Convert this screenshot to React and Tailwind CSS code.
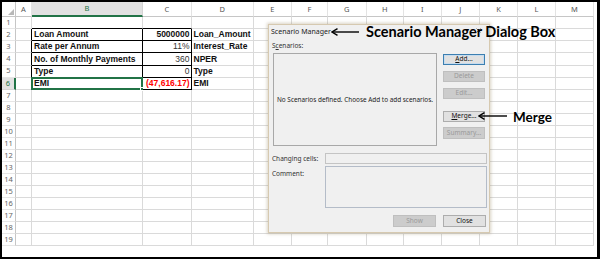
import React from "react";

const LETTERS = ["", "A", "B", "C", "D", "E", "F", "G", "H", "I", "J", "K", "L", "M"];

const DATA = {
  2: { 2: "Loan Amount", 3: "5000000", 4: "Loan_Amount" },
  3: { 2: "Rate per Annum", 3: "11%", 4: "Interest_Rate" },
  4: { 2: "No. of Monthly Payments", 3: "360", 4: "NPER" },
  5: { 2: "Type", 3: "0", 4: "Type" },
  6: { 2: "EMI", 3: "(47,616.17)", 4: "EMI" },
};

function cellClass(r, c) {
  if (r === 0 && c === 0) return "relative border-r border-b border-[#c6c6c6] bg-white";
  if (r === 0) {
    if (c === 2)
      return "flex items-center justify-center border-r border-r-[#d4d4d4] border-b-2 border-b-[#217346] bg-[#e1e1e1] text-[#217346] text-[7.5px] font-['Noto_Sans',sans-serif]";
    return "flex items-center justify-center border-r border-b border-r-[#e3e3e3] border-b-[#c6c6c6] bg-white text-[#555] text-[7.5px] font-['Noto_Sans',sans-serif]";
  }
  if (c === 0) {
    if (r === 6)
      return "flex items-center justify-center border-r-2 border-b border-r-[#217346] border-b-[#d4d4d4] bg-[#e1e1e1] text-[#217346] text-[7.5px] font-['Noto_Sans',sans-serif]";
    return "flex items-center justify-center border-r border-b border-r-[#c6c6c6] border-b-[#e6e6e6] bg-white text-[#666] text-[7.5px] font-['Noto_Sans',sans-serif]";
  }
  const inTable = r >= 2 && r <= 6 && (c === 2 || c === 3);
  if (inTable) return "relative flex items-center border-r border-b border-black";
  if (r === 1 && (c === 2 || c === 3)) return "border-r border-b border-r-[#dadada] border-b-black";
  if (c === 1 && r >= 2 && r <= 6) return "border-r border-b border-r-black border-b-[#dadada]";
  return "flex items-center border-r border-b border-[#dadada]";
}

function textClass(r, c) {
  if (c === 3) {
    if (r === 6) return "w-full text-right pr-[1px] text-[#ff0000] font-bold";
    if (r === 2) return "w-full text-right pr-[1px] text-[#111] font-bold";
    return "w-full text-right pr-[1px] text-[#333]";
  }
  return "pl-[2px] text-[#111] font-bold";
}

function Cell({ r, c }) {
  let content = null;
  if (r === 0 && c === 0) {
    content = (
      <svg className="absolute right-[1px] bottom-[1px]" width="6" height="6" viewBox="0 0 6 6">
        <polygon points="6,0 6,6 0,6" fill="#b8b8b8" />
      </svg>
    );
  } else if (r === 0) {
    content = LETTERS[c];
  } else if (c === 0) {
    content = String(r);
  } else if (DATA[r] && DATA[r][c]) {
    content = (
      <span
        className={
          "whitespace-nowrap text-[8.5px] leading-[11px] font-['Liberation_Sans',Arial,sans-serif] " +
          textClass(r, c)
        }
      >
        {DATA[r][c]}
      </span>
    );
  }
  const sel = r === 6 && c === 2;
  return (
    <div className={cellClass(r, c) + (sel ? " relative" : "")}>
      {content}
      {sel && (
        <div className="absolute -left-[1px] -top-[1px] -right-[1px] -bottom-[1px] border-2 border-[#217346]">
          <div className="absolute -right-[3px] -bottom-[3px] w-[4px] h-[4px] bg-[#217346] border border-white" />
        </div>
      )}
    </div>
  );
}

function Btn({ children, kind }) {
  const base =
    "h-[11.5px] w-full flex items-center justify-center text-[6.5px] leading-none font-['Noto_Sans',sans-serif] border";
  if (kind === "default")
    return <div className={base + " bg-[#e1e1e1] border-[#3c7fb1] text-[#111] shadow-[inset_0_0_0_1px_#c7dcee]"}>{children}</div>;
  if (kind === "normal") return <div className={base + " bg-[#e1e1e1] border-[#adadad] text-[#111]"}>{children}</div>;
  return <div className={base + " bg-[#cccccc] border-[#bfbfbf] text-[#9a9a9a]"}>{children}</div>;
}

function ArrowLeft({ w }) {
  return (
    <svg width={w} height="8" viewBox={`0 0 ${w} 8`}>
      <line x1="2" y1="4" x2={w} y2="4" stroke="#000" strokeWidth="1.4" />
      <path d="M6.5 0.6 L1 4 L6.5 7.4" fill="none" stroke="#000" strokeWidth="1.4" />
    </svg>
  );
}

function Dialog() {
  return (
    <div className="absolute left-[266px] top-[22px] w-[222px] h-[209px] bg-[#f0f0f0] border border-[#d6c9b0] shadow-[0_0_3px_1px_rgba(150,130,90,0.35)] flex flex-col text-[#222] font-['Noto_Sans',sans-serif]">
      <div className="relative h-[15px] flex items-center pl-[2px] text-[7px] text-[#222]">
        Scenario Manager
        <svg className="absolute right-[8px] top-[3px]" width="5" height="5" viewBox="0 0 5 5">
          <path d="M0.5 0.5 L4.5 4.5 M4.5 0.5 L0.5 4.5" stroke="#555" strokeWidth="0.8" />
        </svg>
      </div>
      <div className="h-[12px] flex items-center pl-[3px] text-[6.5px] text-[#333]">
        S<span className="underline">c</span>enarios:
      </div>
      <div className="mt-[1px] flex pl-[4px]">
        <div className="w-[164px] h-[93px] border border-[#a8a8a8] bg-[#f0f0f0] flex items-center justify-center text-[6.4px] text-[#222] whitespace-nowrap">
          No Scenarios defined. Choose Add to add scenarios.
        </div>
        <div className="ml-[6px] w-[42px] flex flex-col pt-[0.5px]">
          <Btn kind="default">
            <span className="underline">A</span>dd...
          </Btn>
          <div className="mt-[5.5px]">
            <Btn kind="disabled">Delete</Btn>
          </div>
          <div className="mt-[5.5px]">
            <Btn kind="disabled">Edit...</Btn>
          </div>
          <div className="mt-[11.5px]">
            <Btn kind="normal">
              <span className="underline">M</span>erge...
            </Btn>
          </div>
          <div className="mt-[5px]">
            <Btn kind="disabled">Summary...</Btn>
          </div>
        </div>
      </div>
      <div className="mt-[7px] flex items-center">
        <div className="w-[56px] pl-[3px] text-[6.5px] text-[#333] whitespace-nowrap">Changing cells:</div>
        <div className="w-[162px] h-[11px] border border-[#c4c4c4] bg-[#f0f0f0]" />
      </div>
      <div className="mt-[2px] flex">
        <div className="w-[56px] pl-[3px] pt-[3px] text-[6.5px] text-[#333]">Comment:</div>
        <div className="w-[162px] h-[42px] border border-[#b4bcc8] bg-[#f0f0f0]" />
      </div>
      <div className="mt-[7px] flex justify-end pr-[3px] gap-[7px]">
        <div className="w-[43px]">
          <Btn kind="disabled">Show</Btn>
        </div>
        <div className="w-[43px]">
          <Btn kind="normal">Close</Btn>
        </div>
      </div>
    </div>
  );
}

export default function App() {
  const rows = [];
  for (let r = 0; r <= 19; r++) {
    for (let c = 0; c <= 13; c++) {
      rows.push(<Cell key={r + "-" + c} r={r} c={c} />);
    }
  }
  return (
    <div className="w-[600px] h-[259px] bg-black pt-[2px] pl-[2px] pr-[3px] pb-[2px]">
      <div className="relative w-full h-full bg-white overflow-hidden">
        <div className="grid grid-cols-[14px_16px_111px_48.5px_62.5px_37.7px_36.3px_38.7px_37.3px_37.7px_38.3px_38px_38px_38px] grid-rows-[15.3px_repeat(19,12.07px)] w-[592px]">
          {rows}
        </div>
        <Dialog />
        <div className="absolute left-[329px] top-[26px] flex items-center">
          <ArrowLeft w={28} />
        </div>
        <div className="absolute left-[364px] top-[21px] h-[18px] flex items-center text-[14.5px] font-bold text-black whitespace-nowrap font-['Lato',sans-serif]">
          Scenario Manager Dialog Box
        </div>
        <div className="absolute left-[476px] top-[110px] flex items-center">
          <ArrowLeft w={29} />
        </div>
        <div className="absolute left-[511px] top-[106px] h-[18px] flex items-center text-[13.5px] font-bold text-black whitespace-nowrap font-['Lato',sans-serif]">
          Merge
        </div>
      </div>
    </div>
  );
}
